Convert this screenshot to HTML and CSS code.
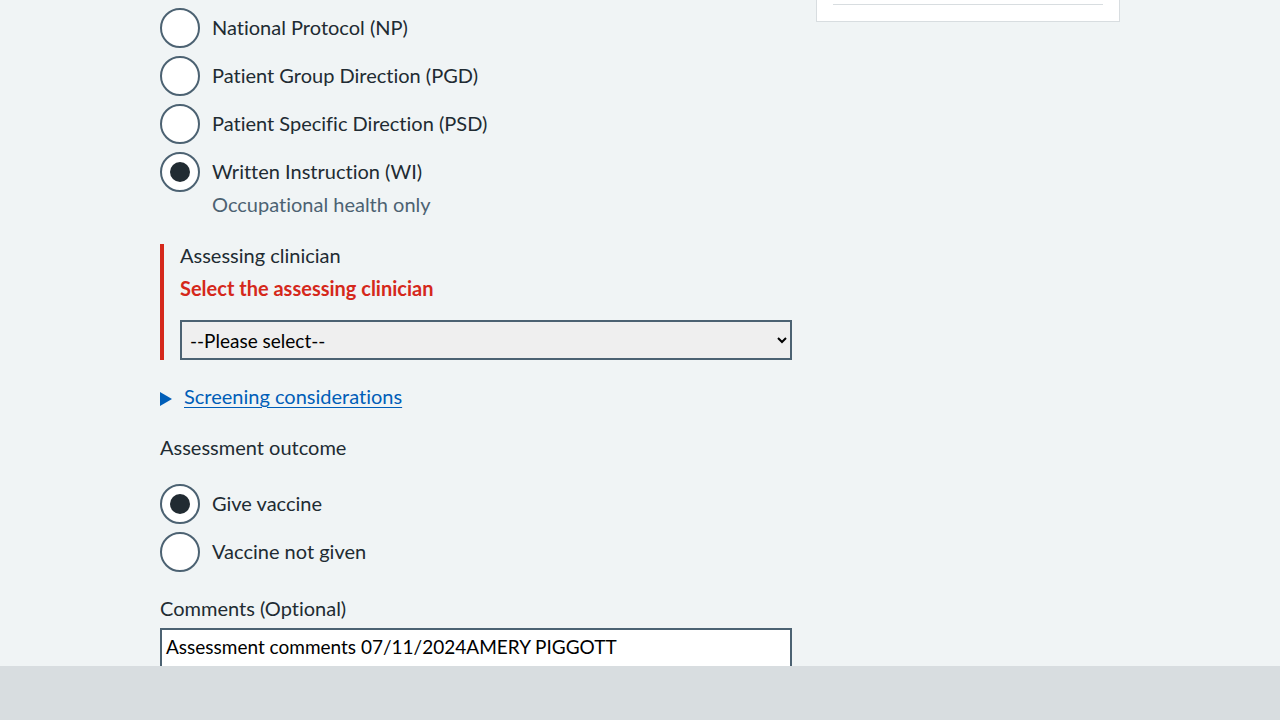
FILE: index.html
```html
<!DOCTYPE html>
<html lang="en">
<head>
<meta charset="utf-8">
<title>Assessment</title>
<link rel="stylesheet" href="styles.css">
</head>
<body>
<div class="container">
  <main class="main-col">
    <div class="form-group">
      <div class="radios">
        <div class="radio-item">
          <span class="radio-input"></span>
          <label class="radio-label">National Protocol (NP)</label>
        </div>
        <div class="radio-item">
          <span class="radio-input"></span>
          <label class="radio-label">Patient Group Direction (PGD)</label>
        </div>
        <div class="radio-item">
          <span class="radio-input"></span>
          <label class="radio-label">Patient Specific Direction (PSD)</label>
        </div>
        <div class="radio-item">
          <span class="radio-input checked"></span>
          <div class="radio-text">
            <label class="radio-label">Written Instruction (WI)</label>
            <div class="radio-hint">Occupational health only</div>
          </div>
        </div>
      </div>
    </div>

    <div class="form-group error-group">
      <label class="label">Assessing clinician</label>
      <div class="error-message">Select the assessing clinician</div>
      <select class="select">
        <option>--Please select--</option>
      </select>
    </div>

    <div class="details">
      <svg class="details-arrow" width="12" height="14" viewBox="0 0 12 14"><polygon points="0,0 12,7 0,14" fill="#005eb8"/></svg>
      <a class="details-link" href="#">Screening considerations</a>
    </div>

    <div class="form-group">
      <div class="legend">Assessment outcome</div>
      <div class="radios">
        <div class="radio-item">
          <span class="radio-input checked"></span>
          <label class="radio-label">Give vaccine</label>
        </div>
        <div class="radio-item">
          <span class="radio-input"></span>
          <label class="radio-label">Vaccine not given</label>
        </div>
      </div>
    </div>

    <div class="form-group">
      <label class="label comments-label">Comments (Optional)</label>
      <textarea class="textarea" rows="3">Assessment comments 07/11/2024AMERY PIGGOTT</textarea>
    </div>
  </main>
  <aside class="side-col">
    <div class="card">
      <hr class="card-rule">
    </div>
  </aside>
</div>
<div class="footer-bar"></div>
</body>
</html>
```

FILE: styles.css
```css
* { box-sizing: border-box; }
html, body {
  margin: 0;
  padding: 0;
  background: #f0f4f5;
  color: #212b32;
  font-family: Lato, "Noto Sans", "Liberation Sans", sans-serif;
  font-size: 20px;
  line-height: 28px;
  font-variant-ligatures: none;
}
.container {
  width: 960px;
  margin: 0 auto;
  display: flex;
  gap: 24px;
  align-items: flex-start;
}
.main-col {
  width: 632px;
  padding-top: 8px;
}
.side-col {
  width: 304px;
}
.card {
  background: #fff;
  border: 1px solid #d8dde0;
  border-top: none;
  padding: 4px 16px 16px;
}
.card-rule {
  margin: 0;
  border: none;
  border-top: 1px solid #d8dde0;
}
.form-group {
  margin-bottom: 24px;
}
.radios {
  display: flex;
  flex-direction: column;
  gap: 8px;
}
.radio-item {
  display: flex;
  align-items: flex-start;
}
.radio-input {
  flex: none;
  width: 40px;
  height: 40px;
  border: 2px solid #4c6272;
  border-radius: 50%;
  background: #fff;
  position: relative;
}
.radio-input.checked::after {
  content: "";
  position: absolute;
  left: 8px;
  top: 8px;
  width: 20px;
  height: 20px;
  border-radius: 50%;
  background: #212b32;
}
.radio-label {
  display: block;
  padding: 5px 12px 7px;
}
.radio-hint {
  padding: 0 12px 2px;
  margin-top: -2px;
  color: #4c6272;
}
.error-group {
  display: flow-root;
  border-left: 4px solid #d5281b;
  padding-left: 16px;
}
.label {
  display: block;
  margin-bottom: 4px;
}
.error-group .label {
  margin-top: -3px;
  margin-bottom: 5px;
}
.comments-label {
  margin-top: -2px;
  margin-bottom: 6px;
}
.legend {
  margin-top: -3px;
  margin-bottom: 23px;
}
.error-message {
  color: #d5281b;
  font-weight: bold;
  margin-bottom: 18px;
}
.select {
  display: block;
  width: 100%;
  height: 40px;
  border: 2px solid #4c6272;
  border-radius: 0;
  background: #efefef;
  color: #000;
  font-family: inherit;
  font-size: 19px;
  padding: 0 4px;
}
.details {
  display: flex;
  align-items: center;
  gap: 12px;
  margin-bottom: 24px;
}
.details-arrow {
  flex: none;
  margin-top: 1px;
}
.details-link {
  color: #005eb8;
  text-decoration: underline;
  text-underline-offset: 3px;
  text-decoration-thickness: 1px;
  line-height: 22px;
  padding: 1px 0 5px;
}
.textarea {
  display: block;
  width: 100%;
  height: 100px;
  border: 2px solid #4c6272;
  border-radius: 0;
  background: #fff;
  color: #000;
  font-family: inherit;
  font-size: 19px;
  line-height: 28px;
  padding: 3px 4px;
  resize: none;
}
.footer-bar {
  position: fixed;
  left: 0;
  right: 0;
  bottom: 0;
  height: 54px;
  background: #d8dde0;
}
```
